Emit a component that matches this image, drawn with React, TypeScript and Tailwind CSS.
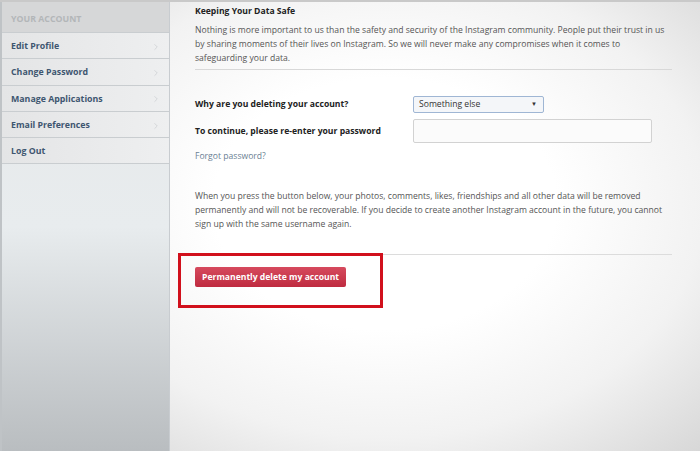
import { ChevronRight } from "lucide-react";

const menu = ["Edit Profile", "Change Password", "Manage Applications", "Email Preferences", "Log Out"];

export default function App() {
  return (
    <div
      className="flex h-[451px] w-[700px] overflow-hidden border-t-2 border-[#c9c9c9] bg-[radial-gradient(ellipse_70%_80%_at_55%_45%,#ffffff_35%,#f2f2f2_65%,#d2d2d2_100%)] text-[#333]"
      style={{ fontFamily: '"Open Sans", "Noto Sans", sans-serif' }}
    >
      <aside className="flex w-[170px] shrink-0 flex-col border-l-2 border-r border-l-[#bfc3c6] border-r-[#c8ccd0] bg-gradient-to-b from-[#e6e8e9] via-[#e8ecee] to-[#b9bdc0]">
        <div className="flex h-[31px] items-center border-b border-[#c9cdd0] bg-[#d6d7d8] pl-[9px] pt-[5px] text-[8.8px] font-bold uppercase text-[#b3b6b8]">
          Your Account
        </div>
        {menu.map((item, i) => (
          <div
            key={item}
            className="flex h-[26.3px] items-center justify-between border-b border-[#c9cdd0] bg-gradient-to-r from-[#e4e5e6] to-[#eeeff0] pl-[9px] pr-[8px] pt-[2px] text-[8.8px] font-bold text-[#3e5670]"
          >
            <span>{item}</span>
            {i < 4 && <ChevronRight size={10} strokeWidth={1.5} className="text-[#c4c7ca]" />}
          </div>
        ))}
      </aside>

      <main className="flex-1 pl-[25px] pr-[28px] pt-[2px] text-[8.6px]">
        <h2 className="text-[8.6px] font-bold leading-[14px] text-[#222]">Keeping Your Data Safe</h2>
        <p className="mt-[5px] leading-[14px] text-[#555]">
          Nothing is more important to us than the safety and security of the Instagram community. People put their trust in us
          by sharing moments of their lives on Instagram. So we will never make any compromises when it comes to
          safeguarding your data.
        </p>
        <div className="mt-[4px] h-px bg-[#d8d8d8]" />

        <div className="mt-[26px] grid grid-cols-[218px_1fr] items-center gap-y-[6px]">
          <label className="font-bold text-[#222]">Why are you deleting your account?</label>
          <div className="flex h-[17px] w-[131px] items-center justify-between rounded-[2px] border border-[#9fb6d4] bg-[#f4f6f9] pl-[5px] pr-[6px] text-[#333]">
            <span>Something else</span>
            <span className="text-[6px]">▼</span>
          </div>
          <label className="font-bold text-[#222]">To continue, please re-enter your password</label>
          <div className="h-[24px] w-[239px] rounded-[2px] border border-[#d2d2d2] bg-[#fbfbfb]" />
        </div>
        <a className="mt-[6px] block leading-[14px] text-[#6b7f94]">Forgot password?</a>

        <p className="mt-[26px] leading-[14px] text-[#555]">
          When you press the button below, your photos, comments, likes, friendships and all other data will be removed
          permanently and will not be recoverable. If you decide to create another Instagram account in the future, you cannot
          sign up with the same username again.
        </p>
        <div className="mt-[23px] h-px bg-[#dcdcdc]" />

        <div className="relative mt-[12px]">
          <button className="h-[20px] rounded-[2px] bg-gradient-to-b from-[#d64a5e] to-[#bf2a40] px-[7px] text-[8.6px] font-bold text-white">
            Permanently delete my account
          </button>
          <div className="pointer-events-none absolute left-[-17px] top-[-14px] h-[55px] w-[205px] border-[3px] border-[#d1101c]" />
        </div>
      </main>
    </div>
  );
}
